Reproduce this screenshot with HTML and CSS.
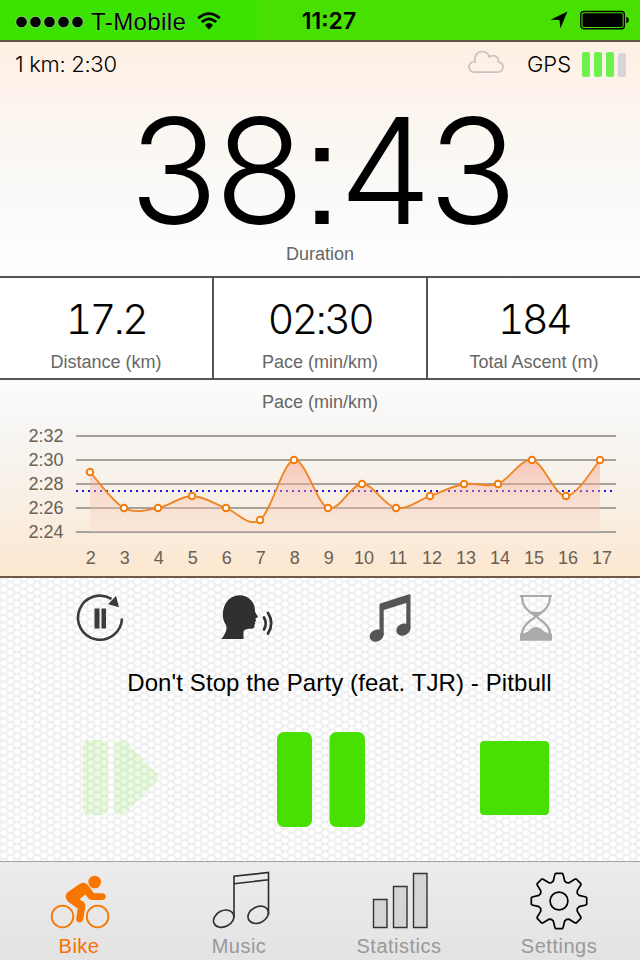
FILE: index.html
```html
<!DOCTYPE html>
<html lang="en">
<head>
    <meta charset="utf-8">
    <title>Bike Workout</title>
    <link rel="stylesheet" href="styles.css">
</head>
<body>
    <div class="app">
        <header class="status-bar">
            <div class="carrier">
                <svg width="70" height="14" viewBox="0 0 70 14"><g stroke="#8fd977"><circle cx="6.5" cy="7" r="5.8"/><circle cx="20.5" cy="7" r="5.8"/><circle cx="34.5" cy="7" r="5.8"/><circle cx="48.5" cy="7" r="5.8"/><circle cx="62.5" cy="7" r="5.8"/></g></svg>
                <span class="carrier-name">T-Mobile</span>
                <svg class="wifi" width="24" height="18" viewBox="0 0 24 18"><g fill="none" stroke="#000" stroke-width="2.7"><path d="M1.2 6.2Q12-3 22.8 6.2"/><path d="M4.8 10Q12 3.6 19.2 10"/></g><path d="M8 13.2Q12 9 16 13.2L12 17.5Z"/></svg>
            </div>
            <div class="clock">11:27</div>
            <div class="status-icons">
                <svg width="18" height="18" viewBox="0 0 18 18"><path d="M17.5.5 10.3 17.5 9.5 9 .5 8.7Z"/></svg>
                <svg width="50" height="20" viewBox="0 0 50 20"><rect x=".8" y="1.500" width="43.6" height="17.2" rx="3" fill="none" stroke="#000" stroke-width="1.4"/><rect x="2.5" y="3.200" width="40.2" height="13.8" rx="1.5"/><path d="M46.3 6.8q2.6.6 2.6 3.3t-2.6 3.4Z"/></svg>
            </div>
        </header>

        <section class="summary">
            <div class="info-row">
                <span class="last-km">1 km: 2:30</span>
                <svg class="cloud" width="36" height="24" viewBox="0 0 36 24"><path d="M6.500 22.200C3.300 22.200 1 19.800 1 16.800C1 13.800 3.500 11.400 7 11.800C5.800 6 9 1.500 14 1.500C18 1.500 20.500 4 21.300 7C25.500 3.800 30.800 6.500 30.300 11.800C33 12.300 35 14.300 35 17C35 20 32.800 22.200 29.500 22.200Z" fill="none" stroke="#c5c3c1" stroke-width="1.700"/></svg>
                <span class="gps-label">GPS</span>
                <div class="gps-bars"><i></i><i></i><i></i><i class="off"></i></div>
            </div>
            <div class="duration">38:43</div>
            <div class="label">Duration</div>
        </section>

        <section class="stats">
            <div class="stat"><div class="value">17.2</div><div class="label">Distance (km)</div></div>
            <div class="stat"><div class="value">02:30</div><div class="label">Pace (min/km)</div></div>
            <div class="stat"><div class="value">184</div><div class="label">Total Ascent (m)</div></div>
        </section>

        <section class="pace">
            <div class="label">Pace (min/km)</div>
            <svg id="paceChart" class="chart" width="640" height="160" viewBox="0 416 640 160">
                <defs>
                    <linearGradient id="fill" gradientUnits="userSpaceOnUse" x1="0" y1="460" x2="0" y2="532">
                        <stop offset="0" stop-color="#f69c86" stop-opacity=".5"/>
                        <stop offset="1" stop-color="#fbd9c8" stop-opacity=".25"/>
                    </linearGradient>
                </defs>
            </svg>
        </section>

        <section class="player">
            <div class="tools">
                <svg width="48" height="48" viewBox="0 0 48 48"><path d="M34.500 4.900A22 22 0 1 0 45 24.500" fill="none" stroke="#3b3b3b" stroke-width="2.600"/><path d="M39 2 42 13.200 31 10.200Z" fill="#3b3b3b"/><path d="M17.500 14.500h5v20h-5zM24.500 14.500h4.500v20h-4.500z" fill="#3b3b3b"/></svg>
                <svg class="voice" width="52" height="48" viewBox="0 0 52 48"><path d="M.3 45C3.500 41 6.500 37 5.200 31.500C1.500 26 1 20 2.800 14C5 6 11 1.200 18.500 1.200C28 1.200 34 8.500 34 16.500Q33.500 18.500 36.800 22.500Q37 24 34.500 24.300L35 27 33.800 28.200 34.300 29.500Q33 30.500 33.500 32.500Q33.500 34.500 31 34.800C25 34.500 22 36 22.500 39V45Z" fill="#303030"/><g fill="none" stroke="#333" stroke-linecap="round"><path d="M43 23.500Q46.500 29.500 43 35.500" stroke-width="2.700"/><path d="M47 19Q53.500 29 47 39.500" stroke-width="2.700"/></g></svg>
                <svg class="note" width="42" height="48" viewBox="0 0 42 48"><g fill="#555"><path d="M10.500 10.500Q10.500 9.800 11.300 9.500L40 .2Q41.500-.1 41.500 1.200V35H37.300V9L14.700 16V41H10.500Z"/><ellipse cx="7.600" cy="41.600" rx="7.300" ry="5.800" transform="rotate(-24 7.600 41.600)"/><ellipse cx="34.300" cy="35.600" rx="7.300" ry="5.800" transform="rotate(-24 34.300 35.600)"/></g></svg>
                <svg class="hourglass" width="34" height="48" viewBox="0 0 34 48"><g fill="none" stroke="#aaa" stroke-width="2.200"><path d="M1 2H33M3 2C3 12 8 16 14.500 20.500Q17 22.500 14.500 24.500C6 30 2.500 35 2.500 44M31 2C31 12 26 16 19.500 20.500Q17 22.500 19.500 24.500C28 30 31.500 35 31.500 44"/></g><path d="M8.500 16.500Q17 19.500 25.500 16.500L17 24ZM1 46.700V40Q9 39 11.500 35Q17 31 22.500 35Q25 39 33 40V46.700Z" fill="#aaa"/></svg>
            </div>
            <div class="song">Don't Stop the Party (feat. TJR) - Pitbull</div>
            <div class="controls">
                <svg class="resume" width="76" height="76" viewBox="0 0 76 76"><rect width="25" height="75" rx="5"/><path d="M31 6Q31 0 37 0H39Q41 0 43 1.500L74 34Q77.500 37.500 74 41L43 73Q41 75 38 75H37Q31 75 31 69Z"/></svg>
                <svg class="pause" width="88" height="95" viewBox="0 0 88 95"><rect width="35" height="95" rx="7"/><rect x="52.500" width="35.500" height="95" rx="7"/></svg>
                <div class="stop"></div>
            </div>
        </section>

        <nav class="tabs">
            <div class="tab active">
                <svg width="60" height="56" viewBox="-1 -1 60 56"><g fill="none" stroke="#f87600" stroke-width="1.800"><circle cx="12.500" cy="40.500" r="10.800"/><circle cx="47.600" cy="40.500" r="10.800"/></g><circle cx="44.700" cy="6" r="6.300" fill="#f87600"/><path d="M17 16.800L29.500 7.900Q35 4.900 38.500 9.800L44 17.300H52.500Q55.800 17.800 55.800 20.600Q55.500 23.800 52.500 24H41.500Q39.500 24 38 22.200L35.600 18.600 29.500 23.200 33.500 25.800Q35.600 27.500 35.300 30.500L33.300 43Q32.500 46.500 29.300 46.500Q26 46 26.200 42.500L27.700 32.500 17.800 25.600Q14 21 17 16.800Z" fill="#f87600"/></svg>
                <span>Bike</span>
            </div>
            <div class="tab">
                <svg width="60" height="56" viewBox="-1 0 60 56"><g fill="none" stroke="#2d2d2d" stroke-width="1.600"><path d="M24 43V1.300L58.500-2.500V40M24 8.800 58.500 4.700"/><ellipse cx="13.700" cy="43.700" rx="10.700" ry="8" transform="rotate(-27 13.700 43.700)"/><ellipse cx="48.200" cy="39.800" rx="10.700" ry="8" transform="rotate(-27 48.200 39.800)"/></g></svg>
                <span>Music</span>
            </div>
            <div class="tab">
                <svg width="60" height="56" viewBox="0 0 60 56"><g fill="#d4d4d4" stroke="#333" stroke-width="1.400"><path d="M4.500 24.500h13.500v28H4.500zM24.500 11.500h13.500v41H24.500zM44.500-1.500h13.500v54H44.500z"/></g></svg>
                <span>Statistics</span>
            </div>
            <div class="tab">
                <svg width="60" height="56" viewBox="0 0 60 56"><g fill="none" stroke="#000" stroke-width="1.700" stroke-linejoin="round"><path id="gear" d=""/><circle cx="30" cy="26" r="8.900"/></g></svg>
                <span>Settings</span>
            </div>
        </nav>
    </div>

    <script>
        const paces = [29, 26, 26, 27, 26, 25, 30, 26, 28, 26, 27, 28, 28, 30, 27, 30];
        const chart = document.getElementById('paceChart');

        function add(tag, attrs, text) {
            const el = document.createElementNS('http://www.w3.org/2000/svg', tag);
            for (const name in attrs) el.setAttribute(name, attrs[name]);
            if (text) el.textContent = text;
            chart.appendChild(el);
        }

        const points = paces.map((p, i) => [90 + i * 34, 460 + (30 - p) * 12]);

        // Grid lines with their labels
        [32, 30, 28, 26, 24].forEach((v, i) => {
            const y = 436 + i * 24;
            add('line', { x1: 76, x2: 616, y1: y, y2: y, class: 'grid-line' });
            add('text', { x: 63.5, y: y + 6, class: 'axis y-axis' }, '2:' + v);
        });
        add('line', { x1: 76, x2: 613, y1: 491, y2: 491, class: 'average' });

        // Smooth curve through all the points
        let d = 'M' + points[0];
        for (let i = 0; i < points.length - 1; i++) {
            const a = points[i - 1] || points[i];
            const b = points[i];
            const c = points[i + 1];
            const e = points[i + 2] || c;
            d += `C${b[0] + (c[0] - a[0]) / 6},${b[1] + (c[1] - a[1]) / 6} ${c[0] - (e[0] - b[0]) / 6},${c[1] - (e[1] - b[1]) / 6} ${c}`;
        }
        add('path', { d: d + 'V532H90Z', fill: 'url(#fill)' });
        add('path', { d: d, class: 'curve' });

        points.forEach((p, i) => {
            add('circle', { cx: p[0], cy: p[1], r: 3.3, class: 'dot' });
            add('text', { x: p[0] + (i < 8 ? 0.8 : 2), y: 564, class: 'axis x-axis' }, String(i + 2));
        });

        // Gear outline: eight teeth
        let gear = '';
        for (let i = 0; i < 8; i++) {
            [[-22.5, 19.8], [-16, 20.8], [-8.5, 27.2], [-6.5, 27.9], [6.5, 27.9], [8.5, 27.2], [16, 20.8]].forEach(([angle, r]) => {
                const t = (angle + i * 45) * Math.PI / 180;
                gear += (gear ? 'L' : 'M') + (30 + r * Math.sin(t)).toFixed(1) + ' ' + (26 - r * Math.cos(t)).toFixed(1);
            });
        }
        document.getElementById('gear').setAttribute('d', gear + 'Z');
    </script>
</body>
</html>
```
FILE: styles.css
```css
* {
    box-sizing: border-box;
}

body {
    margin: 0;
    font-family: "Liberation Sans", Arial, sans-serif;
    color: #000;
}

svg {
    display: block;
    flex: none;
    overflow: visible;
}

.app {
    width: 640px;
    height: 960px;
    display: flex;
    flex-direction: column;
    overflow: hidden;
}

/* Status bar */
.status-bar {
    height: 42px;
    display: grid;
    grid-template-columns: 258px 142px 1fr;
    align-items: center;
    background: linear-gradient(90deg, #3be300 258px, #48e000 258px);
    border-bottom: 2px solid #5d5346;
}

.carrier {
    display: flex;
    align-items: center;
    padding: 3px 0 0 15px;
}

.carrier-name {
    margin: 0 10px 0 6px;
    width: 96px;
    font-size: 24px;
    line-height: 28px;
    letter-spacing: 0.4px;
    white-space: nowrap;
    text-shadow: 0 0 1px #c4e8b6;
}

.wifi {
    margin-top: -2px;
}

.clock {
    padding-top: 1px;
    text-align: center;
    font: 600 23px "Inter", sans-serif;
    font-feature-settings: "ss07";
    letter-spacing: 0;
}

.status-icons {
    display: flex;
    align-items: center;
    justify-content: flex-end;
    gap: 12px;
    padding-right: 10px;
}

/* Duration */
.summary {
    height: 234px;
    background: linear-gradient(#fdf1e4, #fef3ec 50px, #fbf6f0 80px, #fafaf9 160px, #fefefe);
}

.info-row {
    height: 46px;
    display: flex;
    align-items: center;
    padding: 0 14px 2px 15px;
    font-family: "Inter", sans-serif;
    font-feature-settings: "ss07";
    font-weight: 300;
    font-size: 22px;
}

.last-km {
    letter-spacing: -0.3px;
}

.cloud {
    margin: 0 23px 4px auto;
}

.gps-label {
    width: 45px;
    letter-spacing: 0;
}

.gps-bars {
    display: flex;
    align-items: flex-end;
    gap: 4px;
    margin-left: 10px;
}

.gps-bars i {
    width: 8px;
    height: 25px;
    border-radius: 2px;
    background: #6bf04c;
}

.gps-bars .off {
    height: 24px;
    background: #d6d6d6;
}

.duration {
    height: 156px;
    padding-left: 3px;
    text-align: center;
    font: 300 147px/166px "Inter", sans-serif;
    font-feature-settings: "ss07";
    letter-spacing: -3.5px;
}

.label {
    text-align: center;
    font-size: 18px;
    line-height: 20px;
    color: #666;
}

/* Stat cells */
.stats {
    height: 104px;
    display: grid;
    grid-template-columns: 214px 214px 1fr;
    background: #fff;
    border-top: 2px solid #555;
    border-bottom: 2px solid #555;
}

.stat {
    padding-top: 16px;
    border-right: 2px solid #555;
}

.stat:last-child {
    border-right: none;
}

.value {
    height: 58px;
    text-align: center;
    font: 300 41px/50px "Inter", sans-serif;
    font-feature-settings: "ss07", "tnum";
    letter-spacing: -2.5px;
}

/* Pace chart */
.pace {
    height: 198px;
    padding-top: 12px;
    background: linear-gradient(#fcfcfc, #f7f5f2 60px, #f8efe4 125px, #fde7cf);
    border-bottom: 2px solid #6e5a46;
}

.chart {
    margin-top: 4px;
}

.grid-line {
    stroke: #a6a19a;
    stroke-width: 2;
}

.average {
    stroke: #1f14e0;
    stroke-width: 2;
    stroke-dasharray: 2 4;
}

.curve {
    fill: none;
    stroke: #f08422;
    stroke-width: 1.8;
}

.dot {
    fill: #fff;
    stroke: #f57c0a;
    stroke-width: 2;
}

.axis {
    font-size: 18px;
    fill: #6b6052;
}

.y-axis {
    text-anchor: end;
}

.x-axis {
    text-anchor: middle;
}

/* Music and controls */
.player {
    height: 283px;
    background-color: #eee;
    background-image:
        radial-gradient(ellipse 3.4px 2.9px at center, #fff 80%, transparent 110%),
        radial-gradient(ellipse 3.4px 2.9px at center, #fff 80%, transparent 110%);
    background-size: 13.4px 7.4px;
    background-position: -3px 0, 3.7px 3.7px;
}

.tools {
    display: flex;
    padding: 16px 0 0 77px;
}

.voice,
.note {
    margin-left: 96px;
}

.hourglass {
    margin-left: 108px;
}

.song {
    padding: 27px 0 0 39px;
    text-align: center;
    font-size: 24px;
    line-height: 28px;
    letter-spacing: 0.1px;
}

.controls {
    display: flex;
    align-items: center;
    padding: 35px 0 0 83px;
    fill: #48e000;
}

.resume {
    margin-bottom: 3px;
    opacity: 0.12;
}

.pause {
    margin: 0 115px 0 118px;
}

.stop {
    width: 69px;
    height: 74px;
    margin-bottom: 3px;
    border-radius: 4px;
    background: #48e000;
}

/* Bottom tabs */
.tabs {
    height: 99px;
    display: grid;
    grid-template-columns: repeat(4, 160px);
    background: linear-gradient(#ececec, #e3e3e3);
    border-top: 1px solid #a3a3a3;
}

.tab {
    display: flex;
    flex-direction: column;
    align-items: center;
    padding: 13px 2px 0 0;
    font-size: 20px;
    line-height: 24px;
    letter-spacing: 0.5px;
    color: #999;
}

.tab span {
    margin-top: 3px;
}

.tab.active {
    color: #f87000;
}
```
